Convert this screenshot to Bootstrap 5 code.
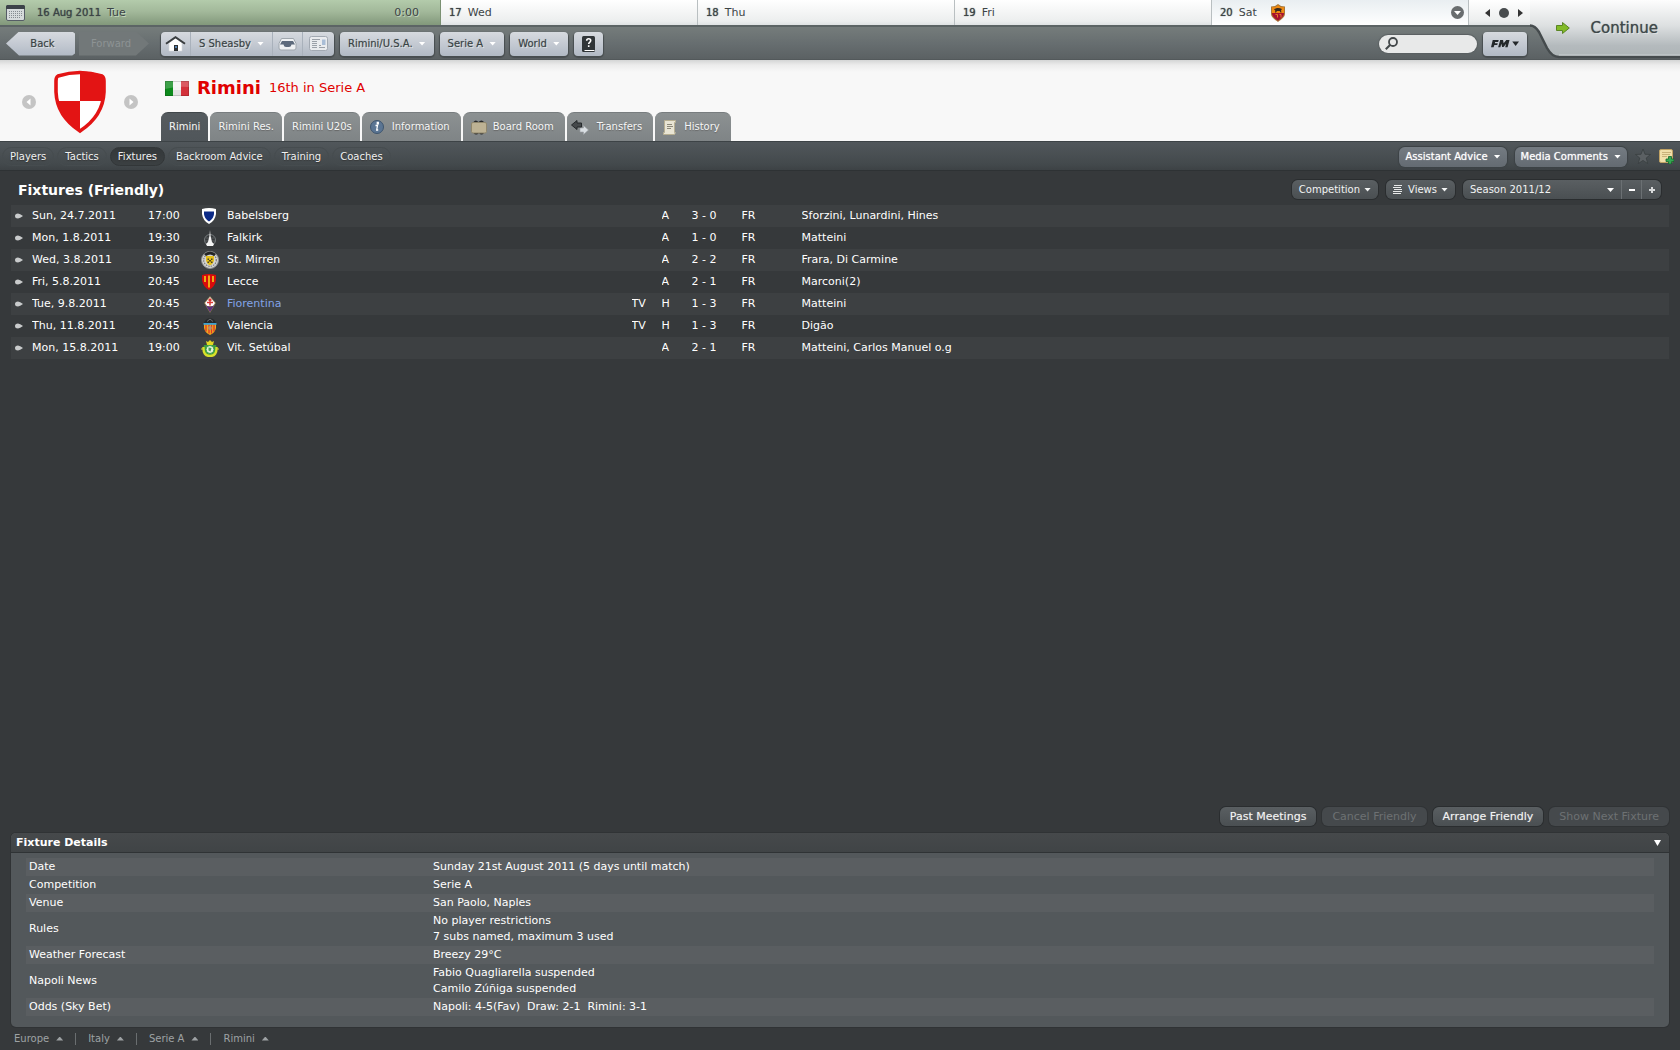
<!DOCTYPE html>
<html lang="en">
<head>
<meta charset="utf-8">
<meta name="viewport" content="width=device-width, initial-scale=1">
<title>Rimini - Fixtures</title>
<link rel="stylesheet" href="https://cdn.jsdelivr.net/npm/bootstrap@5.3.0/dist/css/bootstrap.min.css">
<style>
body{font-family:"DejaVu Sans",sans-serif;font-size:11px;line-height:16px;color:#fff;background:#36393b}
button,select,input{font-family:inherit}
svg{display:block;flex:none}
.caret{width:7px;height:4px;flex:none;background:currentColor;clip-path:polygon(0 0,100% 0,50% 100%)}
.caret.up{clip-path:polygon(50% 0,100% 100%,0 100%)}
.caret.pale{color:#fff}
.gap-6{gap:6px}

/* calendar strip */
.daybar{height:27px;background:linear-gradient(#fff,#eceeee 85%,#dfe2e3);color:#3c4446;border-bottom:2px solid #5c6465}
.day{flex:257 1 257px;padding:0 8px;border-right:1px solid #b9bfc1;font-size:11px}
.day b,.today b{font-size:10px;font-weight:400;text-shadow:0 0 1px #3c4446}
.today{flex:441 1 441px;gap:12px;padding:0 21px 0 6px;background:linear-gradient(#b3cbab,#a3b99b 45%,#82987b);border-right:1px solid #7b9173;text-shadow:1px 1px 0 #c4d6bd}
.day.matchday{background:linear-gradient(#e9eef1,#f8fafb 70%,#fff);padding-right:4px}
.pager{flex:211 1 211px;padding-left:16px}
.plain{border:0;background:none;padding:0;color:inherit}

/* main toolbar */
.toolbar{height:33px;background:linear-gradient(#757c7b,#666d6f 55%,#5b6163);border-bottom:1px solid #53595b;padding:1px 153px 0 6px;gap:6px}
.tbtn{height:24px;border:0;padding:0 8px;font-size:10px;color:#394244;background:linear-gradient(#d6dadf,#c2c8d1 55%,#b1b9c4);text-shadow:0 0 1px #8b9296,1px 1px 0 #e2e6ea}
.tbox{border-radius:4px;box-shadow:0 1px 1px 1px #484e50;overflow:hidden}
.tbox .tbtn+.tbtn{border-left:1px solid #a9b1bb}
.tbtn.news{padding:0 6px}
.history{gap:4px;margin-right:6px}
.nav-back{width:69px;padding-left:12px;clip-path:polygon(0 50%,13px 0,96% 0,100% 2px,100% 22px,96% 100%,13px 100%)}
.nav-fwd{width:70px;padding-right:14px;background:#727879;color:#8d9394!important;text-shadow:none;clip-path:polygon(0 0,57px 0,100% 50%,57px 100%,0 100%)}
.search{width:98px;height:18px;border-radius:9px;background:#e8e9e9;padding:0 6px;box-shadow:0 0 1px 1px #5a6062}
.search input{border:0;background:none;outline:0;width:66px;font-size:10px;padding:0}
.continue{width:150px;height:59px;color:#3f484a;font-size:15px}
.continue .cta{padding:0 22px 3px 26px;text-shadow:0 0 1px #5b6466,1px 1px 0 #e8ebec}

/* club header */
.club{height:81px;background:linear-gradient(#d4d5d5,#ececec 5px,#f8f8f8 12px)}
.crestbox{width:161px;padding:2px 23px 0 22px}
.clubname{color:#e00000;font-size:18px;font-weight:700;line-height:24px;margin:0}
.clubpos{color:#e00000;font-size:13px;line-height:24px}
.tabs{gap:2px}
.tabs a{height:29px;border-radius:7px 7px 0 0;background:linear-gradient(#8c9192,#7f8486);color:#f5f6f6;font-size:10px;padding:0 8px;text-decoration:none;text-shadow:0 1px 1px #666;border-top:1px solid #787d7f}
.tabs a.on{background:linear-gradient(#555b5f,#50565a);border-color:#41474a}
.tabs a.pic{padding-right:11px}

/* section navigation */
.subnav{height:30px;gap:3px;background:linear-gradient(#51575b,#43494c 80%,#3d4245);border-top:1px solid #3d4346;border-bottom:1px solid #2e3234;padding:1px 6px 0 2px}
.subnav a{height:19px;border-radius:10px;padding:0 7px;color:#f0f1f1;font-size:10px;text-decoration:none;border:1px solid #464c4f;text-shadow:0 1px 1px #333}
.subnav a.on{background:linear-gradient(#34383a,#3b4042);border-color:#323638}
.abtn{height:20px;border:0;border-radius:6px;padding:0 6px;font-size:10px;color:#fff;background:linear-gradient(#747b82,#646b72);box-shadow:0 0 1px 1px #3c4245;text-shadow:0 0 1px #ddd}

/* dark controls */
.dbtn{height:19px;border:0;border-radius:6px;padding:0 7px;font-size:10px;color:#f2f3f3;background:linear-gradient(#5a5f62,#4a4f52);box-shadow:0 0 0 1px #2a2d2f}
.season{box-shadow:0 0 0 1px #2a2d2f;border-radius:6px;overflow:hidden}
.season .dbtn{border-radius:0;box-shadow:none}
.season .step{width:20px;padding:0;border-left:1px solid #6b7073}
.season .pick{width:158px;position:relative}
.season select{appearance:none;width:100%}
.season .caret{position:absolute;right:7px;top:8px;pointer-events:none}
.act{font-size:11px;padding:0 10px;height:19px;text-shadow:0 0 1px #999}
.act:disabled{color:#6d7173;background:#45494c;text-shadow:none;box-shadow:0 0 0 1px #303335}
.actions{gap:6px;margin-bottom:7px}

/* fixtures */
.page-main{background:#36393b}
.inset-x{padding:0 11px}
.listhead{height:34px;padding:3px 19px 0 18px}
.listhead h1{font-size:14px;line-height:20px;font-weight:700;margin:0}
.fixlist{width:100%;table-layout:fixed}
.fixlist td{height:22px;padding:0;white-space:nowrap;overflow:hidden}
.fixlist tr:nth-child(odd){background:#3d4042}
.fixlist a{color:inherit;text-decoration:none}
.fixlist a.rival{color:#83a3e6}
.c-mark{width:21px}.c-date{width:116px}.c-time{width:53px}.c-crest{width:26px}.c-team{width:24.4%}.c-short{width:30px}.c-score{width:50px}.c-comp{width:60px}

/* details */
.details{border-radius:5px;background:#53585b;box-shadow:0 0 0 1px #303335}
.details-head{height:20px;border-radius:5px 5px 0 0;background:linear-gradient(#46494b,#404446);border-bottom:1px solid #2f3335;padding:0 8px 0 5px}
.details-head h2{font-size:11px;line-height:19px;font-weight:700;margin:0}
.details-body{padding:5px 15px 11px}
.dtable{width:100%;table-layout:fixed}
.dtable th{font-weight:400;width:404px}
.dtable th,.dtable td{padding:1px 3px}
.dtable tr:nth-child(odd){background:#5a5e61}
.crumbs{height:23px;gap:12px;padding-left:14px;color:#9ea2a4;font-size:10px}
.crumbs button{gap:7px;padding-right:12px;border-right:1px solid #6a6e70;height:12px;line-height:12px}
.crumbs button:last-child{border:0}
</style>
<script src="https://cdn.jsdelivr.net/npm/bootstrap@5.3.0/dist/js/bootstrap.bundle.min.js"></script>
</head>
<body class="d-flex flex-column min-vh-100">
<header class="position-relative">
  <div class="daybar d-flex align-items-stretch">
    <div class="today d-flex align-items-center">
      <svg width="19" height="16" viewBox="0 0 19 16"><rect x=".5" y=".5" width="18" height="15" rx="1.500" fill="#d6dbdc" stroke="#565d66"/><path d="M0 1.500a1.500 1.500 0 0 1 1.500-1.500h16a1.500 1.500 0 0 1 1.500 1.500V4H0z" fill="#3c4249"/><path d="M3 6.500h13M3 8.500h13M3 10.500h13M3 12.500h11" stroke="#858c91" stroke-dasharray="1 1"/></svg>
      <div class="d-flex gap-6"><b>16 Aug 2011</b><span>Tue</span></div><span class="ms-auto">0:00</span>
    </div>
    <div class="day d-flex align-items-center gap-6"><b>17</b><span>Wed</span></div>
    <div class="day d-flex align-items-center gap-6"><b>18</b><span>Thu</span></div>
    <div class="day d-flex align-items-center gap-6"><b>19</b><span>Fri</span></div>
    <div class="day matchday d-flex align-items-center gap-6"><b>20</b><span>Sat</span>
      <svg class="ms-2" width="14" height="18" viewBox="0 0 14 18"><path d="M0 2.500 4 2 7 0l3 2 4 .5v7c0 4-4 6-7 8.500C4 15.500 0 13.500 0 9.500z" fill="#a87838"/><path d="M1 3.300 4.500 3 7 1.200 9.500 3l3.500.3V9H1z" fill="#f08a12"/><path d="M1 9h12c0 4-3.500 5.500-6 7.800C4.500 14.500 1 13 1 9z" fill="#a9122f"/><path d="M3 5.500c1.500-1.500 5-2 8-.5l-1 1.500.5 2h-1l-.8-1.500H6L5 8.500H4l.3-2z" fill="#3a2b20"/><path d="M4.500 10.500h2v3m2-3h1.500v3" stroke="#e67a2a" fill="none"/></svg>
      <button class="plain ms-auto" aria-label="Show day"><svg width="13" height="13" viewBox="0 0 13 13"><circle cx="6.500" cy="6.500" r="6.500" fill="#696d6f"/><path d="M3 5h7l-3.500 4z" fill="#fff"/></svg></button></div>
    <div class="pager d-flex align-items-center gap-2">
      <button class="plain" aria-label="Earlier"><svg width="5" height="8" viewBox="0 0 5 8"><path d="M5 0v8L0 4z" fill="#333"/></svg></button>
      <svg width="12" height="12" viewBox="0 0 12 12"><circle cx="6" cy="6" r="5" fill="#484c4e"/></svg>
      <button class="plain" aria-label="Later"><svg width="5" height="8" viewBox="0 0 5 8"><path d="M0 0v8l5-4z" fill="#333"/></svg></button>
    </div>
  </div>

  <nav class="toolbar d-flex align-items-center">
    <div class="history d-flex">
      <button class="tbtn nav-back">Back</button>
      <button class="tbtn nav-fwd" disabled>Forward</button>
    </div>
    <div class="tbox d-flex">
      <button class="tbtn px-1" aria-label="Home"><svg width="21" height="16" viewBox="0 0 21 16"><path d="M4 7 10.500 2 17 7v8H4z" fill="#fff" stroke="#d4d7da" stroke-width=".6"/><path d="M1 7.800 10.500 1.200 20 7.800" fill="none" stroke="#3a3e40" stroke-width="2"/><path d="M9 9h4v6H9z" fill="#2d3133"/><path d="M10 10h2v2h-2z" fill="#5580b0"/></svg></button>
      <button class="tbtn d-flex align-items-center gap-6">S Sheasby<i class="caret pale"></i></button>
      <button class="tbtn px-1" aria-label="Inbox"><svg width="21" height="14" viewBox="0 0 21 14"><path d="M4.500 1.500h12l2.500 5V11q0 2-2 2h-13q-2 0-2-2V6.500z" fill="#eff1f3" stroke="#9fa6ad"/><path d="M5 4h11l2 3.500h-3.500Q14 10 12 10H9Q7 10 6.500 7.500H3z" fill="#5d6a7c"/></svg></button>
      <button class="tbtn news" aria-label="News"><svg width="19" height="15" viewBox="0 0 19 15"><rect x=".5" y=".5" width="18" height="14" rx="2" fill="#e9ebee" stroke="#a2a9b2"/><path d="M3 3.500h8M3 5.500h5M3 7.500h5M3 9.500h5M3 11.500h5M10 11.500h6M10 9.500h2" stroke="#9aa0a8"/><path d="M13 3.500h3.500V9H13z" fill="#a9bdd6"/></svg></button>
    </div>
    <div class="tbox"><button class="tbtn d-flex align-items-center gap-6">Rimini/U.S.A.<i class="caret pale"></i></button></div>
    <div class="tbox"><button class="tbtn d-flex align-items-center gap-6">Serie A<i class="caret pale"></i></button></div>
    <div class="tbox"><button class="tbtn d-flex align-items-center gap-6">World<i class="caret pale"></i></button></div>
    <div class="tbox"><button class="tbtn d-flex align-items-center" aria-label="Help"><svg width="13" height="16" viewBox="0 0 13 16"><rect width="13" height="16" rx="1.500" fill="#303538"/><path d="M2.500 14.500h10" stroke="#fff"/><path d="M4.700 4.800q0-2 2-2t2 1.800q0 1-1 1.700t-1 1.700M6.700 9.300v1.700" fill="none" stroke="#fff" stroke-width="1.600"/></svg></button></div>
    <label class="search d-flex align-items-center gap-2 ms-auto"><svg width="13" height="13" viewBox="0 0 13 13"><circle cx="8" cy="5" r="4" fill="none" stroke="#43484a" stroke-width="1.800"/><path d="M5 8 .8 12.200" stroke="#43484a" stroke-width="2"/></svg><input type="text" aria-label="Search"></label>
    <div class="tbox"><button class="tbtn d-flex align-items-center px-2" aria-label="FM menu"><svg width="28" height="9" viewBox="0 0 29 9"><path d="M1.800 1H8l-.6 2H4.300L4 4.200h3L6.500 6h-3L2.700 8.500H0z" fill="#23282a"/><path d="M9.500 1h3l.6 3.200L15.800 1H19.200l-2 7.500h-2.500l1-3.700-2.700 3.200h-1.500l-.8-3.200-1 3.700H7.400z" fill="#23282a"/><path d="M22 2.500h7L25.500 7z" fill="#23282a"/></svg></button></div>
  </nav>

  <div class="continue position-absolute top-0 end-0">
    <svg class="position-absolute top-0 end-0" width="150" height="59" viewBox="0 0 150 59"><defs><linearGradient id="cg" x1="0" y1="0" x2="0" y2="1"><stop offset="0" stop-color="#fdfdfd"/><stop offset=".45" stop-color="#dde0e1"/><stop offset=".8" stop-color="#b4babd"/><stop offset="1" stop-color="#adb4b6"/></linearGradient></defs><path d="M0 0h150v57H29Q22 57 17 48L9 32Q5 25 0 25z" fill="url(#cg)"/><path d="M150 57H29Q22 57 17 48L9 32Q5 25.500 0 25.500" fill="none" stroke="#454b4d" stroke-width="2.500"/><path d="M150 55H29" stroke="#c9ced0"/></svg>
    <button class="plain cta position-relative w-100 h-100 d-flex align-items-center justify-content-between"><svg width="14" height="12" viewBox="0 0 14 12"><path d="M.5 3.500h6v-3L13.300 6 6.500 11.500v-3h-6z" fill="#82bb27" stroke="#5a8524"/></svg><span>Continue</span></button>
  </div>
</header>

<section class="club d-flex">
  <div class="crestbox d-flex align-items-center justify-content-between">
    <button class="plain" aria-label="Previous club"><svg width="14" height="14" viewBox="0 0 14 14"><circle cx="7" cy="7" r="7" fill="#c4c4c4"/><path d="M8.500 3.500v7L4.500 7z" fill="#fff"/></svg></button>
    <svg width="54" height="64" viewBox="0 0 54 64"><path d="M4 6Q27-2 50 6 52 8 52 13V25Q50 46 27 61 4 46 2 25V13Q2 8 4 6z" fill="#fff"/><path d="M27 1.500Q40 1.500 50 5.500 52 7 52 11V25Q51.500 28 50.500 31H27zM27 31H4Q10 49 27 60z" fill="#e31414"/><path d="M5 6Q27-1 49 6 51 7 51 11V22Q50 46 27 61 4 46 3 22V11Q3 7 5 6z" fill="none" stroke="#e31414" stroke-width="3.600"/></svg>
    <button class="plain" aria-label="Next club"><svg width="14" height="14" viewBox="0 0 14 14"><circle cx="7" cy="7" r="7" fill="#c4c4c4"/><path d="M5.500 3.500v7l4-3.500z" fill="#fff"/></svg></button>
  </div>
  <div class="d-flex flex-column justify-content-between pt-3">
    <div class="d-flex align-items-center px-1">
      <svg width="24" height="15" viewBox="0 0 24 15"><path d="M0 0h8v15H0z" fill="#0d8a1c"/><path d="M8 0h8v15H8z" fill="#f4f4f4"/><path d="M8 9h8v6H8z" fill="#e2e2e2"/><path d="M16 0h8v15h-8z" fill="#d3313b"/><path d="M0 0h24v6Q12 5 0 8z" fill="#fff" opacity=".2"/><rect x=".5" y=".5" width="23" height="14" fill="none" stroke="#000" stroke-opacity=".15"/></svg>
      <h1 class="clubname ms-2">Rimini</h1><span class="clubpos ms-2">16th in Serie A</span>
    </div>
    <nav class="tabs d-flex">
      <a href="#" class="on d-flex align-items-center">Rimini</a>
      <a href="#" class="d-flex align-items-center">Rimini Res.</a>
      <a href="#" class="d-flex align-items-center">Rimini U20s</a>
      <a href="#" class="pic d-flex align-items-center gap-2"><svg width="14" height="14" viewBox="0 0 14 14"><circle cx="7" cy="7" r="6.500" fill="#5b7593" stroke="#3f566f"/><path d="M5.500 5.500h2L6.700 10h1.500M7.300 2.500h1v1.300h-1z" fill="none" stroke="#fff" stroke-width="1.300"/></svg>Information</a>
      <a href="#" class="pic d-flex align-items-center gap-6"><svg width="16" height="15" viewBox="0 0 16 15"><path d="M2.500 2q2-3 5 0 3-3 5.500 0v11q-2.500 3-5 0-3 3-5.500 0z" fill="#26282a"/><rect x=".5" y="2.500" width="15" height="10.500" rx="1.500" fill="#bdb294" stroke="#8f866c"/></svg>Board Room</a>
      <a href="#" class="pic d-flex align-items-center gap-2 ps-1"><svg width="18" height="15" viewBox="0 0 18 15"><path d="M17.500 10 12.500 5.500V8H9v4h3.500v2.500z" fill="#d9dee2" stroke="#9aa0a4" stroke-width=".6"/><path d="M.5 5 6 .5V3h4.500v4H6v2.500z" fill="#45494b" stroke="#25292b"/></svg>Transfers</a>
      <a href="#" class="pic d-flex align-items-center gap-2"><svg width="13" height="15" viewBox="0 0 13 15"><path d="M1.500.5h11v2h-1v10h1l-1 2H.5v-2h1z" fill="#e9e5d4" stroke="#b7af92"/><path d="M4 4.500h5M4 6.500h6M4 8.500h4" stroke="#8c8879"/></svg>History</a>
    </nav>
  </div>
</section>

<nav class="subnav d-flex align-items-center">
  <a href="#" class="d-flex align-items-center">Players</a>
  <a href="#" class="d-flex align-items-center">Tactics</a>
  <a href="#" class="d-flex align-items-center on">Fixtures</a>
  <a href="#" class="d-flex align-items-center">Backroom Advice</a>
  <a href="#" class="d-flex align-items-center">Training</a>
  <a href="#" class="d-flex align-items-center">Coaches</a>
  <div class="d-flex align-items-center gap-2 ms-auto">
    <button class="abtn d-flex align-items-center gap-6">Assistant Advice<i class="caret"></i></button>
    <button class="abtn d-flex align-items-center gap-6">Media Comments<i class="caret"></i></button>
    <button class="plain" aria-label="Bookmark"><svg width="16" height="15" viewBox="0 0 16 15"><path d="m8 0 2 5.300 5.500.2-4.300 3.500 1.500 5.500L8 11.400l-4.700 3.100L4.800 9 .5 5.500 6 5.300z" fill="#5b6063" stroke="#373c3e" stroke-width=".7"/></svg></button>
    <button class="plain" aria-label="Add note"><svg width="15" height="15" viewBox="0 0 15 15"><rect x=".5" y=".5" width="13" height="13" rx="1.500" fill="#f1dfaa" stroke="#c0a264"/><path d="M3 3.500h9M3 5.500h8M3 7.500h5" stroke="#c9b27a"/><path d="M9.500 7.500h3V10H15v2.500h-2.500V15h-3v-2.500H7V10h2.500z" fill="#35a853" stroke="#13632b" stroke-width=".8"/></svg></button>
  </div>
</nav>

<main class="page-main flex-grow-1 d-flex flex-column">
  <div class="listhead d-flex align-items-center">
    <h1>Fixtures (Friendly)</h1>
    <div class="d-flex gap-2 ms-auto">
      <button class="dbtn d-flex align-items-center gap-1">Competition<i class="caret"></i></button>
      <button class="dbtn d-flex align-items-center gap-1"><svg width="11" height="9" viewBox="0 0 11 9" shape-rendering="crispEdges"><path d="M1 0h8v1H1zM0 2h8v1H0zM1 4h8v1H1zM0 6h9v1H0zM0 8h8v1H0z" fill="#e8e9e9"/></svg>Views<i class="caret"></i></button>
      <div class="season d-flex">
        <div class="pick"><select class="dbtn" aria-label="Season"><option>Season 2011/12</option></select><i class="caret"></i></div>
        <button class="dbtn step d-flex align-items-center justify-content-center" aria-label="Previous season"><svg width="8" height="8" viewBox="0 0 8 8"><path d="M1 4h6" stroke="#fff" stroke-width="2"/></svg></button>
        <button class="dbtn step d-flex align-items-center justify-content-center" aria-label="Next season"><svg width="8" height="8" viewBox="0 0 8 8"><path d="M1 4h6M4 1v6" stroke="#d8dadb" stroke-width="2"/></svg></button>
      </div>
    </div>
  </div>

  <svg width="0" height="0" class="position-absolute"><symbol id="mk" viewBox="0 0 8 6"><path d="M0 3Q0 .5 3 .5 5 .8 8 3 5 5.200 3 5.500 0 5.500 0 3z" fill="#c9cbcc"/></symbol></svg>
  <div class="inset-x">
  <table class="fixlist">
    <colgroup><col class="c-mark"><col class="c-date"><col class="c-time"><col class="c-crest"><col class="c-team"><col class="c-short"><col class="c-short"><col class="c-score"><col class="c-comp"><col></colgroup>
    <tbody>
    <tr><td><svg class="ms-1" width="8" height="6"><use href="#mk"/></svg></td><td>Sun, 24.7.2011</td><td>17:00</td><td><svg width="16" height="16" viewBox="0 0 16 16"><path d="M1 1Q8-1 15 1v5q-1 7-7 10Q2 13 1 6z" fill="#fff"/><path d="M3 3.500h10V6q-.5 5-5 7.500Q3.500 11 3 6z" fill="#0c2a86"/></svg></td><td><a href="#">Babelsberg</a></td><td></td><td>A</td><td>3 - 0</td><td>FR</td><td>Sforzini, Lunardini, Hines</td></tr>
    <tr><td><svg class="ms-1" width="8" height="6"><use href="#mk"/></svg></td><td>Mon, 1.8.2011</td><td>19:30</td><td><svg width="18" height="16" viewBox="0 0 18 16"><circle cx="9" cy="10" r="5.500" fill="none" stroke="#777c7e"/><path d="M5 8h8M4 11h10" stroke="#6a6f71" stroke-width=".7"/><path d="M9 0 9.600 6 11 12l2 2-1 2H6l-1-2 2-2 1.400-6z" fill="#f4f4f4"/></svg></td><td><a href="#">Falkirk</a></td><td></td><td>A</td><td>1 - 0</td><td>FR</td><td>Matteini</td></tr>
    <tr><td><svg class="ms-1" width="8" height="6"><use href="#mk"/></svg></td><td>Wed, 3.8.2011</td><td>19:30</td><td><svg width="18" height="18" viewBox="0 0 18 18"><circle cx="9" cy="9" r="8.500" fill="#d5d5d3" stroke="#8e9090"/><circle cx="9" cy="9" r="6.300" fill="none" stroke="#77797a" stroke-width="1.200" stroke-dasharray="1.500 1"/><path d="M3 3q6-5 12 0l-2 2Q9 2 5 5z" fill="#232526"/><path d="M5 5h8v5q-1 3-4 4.500Q6 13 5 10z" fill="#e3bf1c"/><path d="M6.500 7.500h1.500V9H6.500zm3.500 0h1.500V9H10zM8 9h2v1.500H8zm-1.500 1.500h1.500V12H6.500zm3.500 0h1.500V12H10z" fill="#4a4326"/></svg></td><td><a href="#">St. Mirren</a></td><td></td><td>A</td><td>2 - 2</td><td>FR</td><td>Frara, Di Carmine</td></tr>
    <tr><td><svg class="ms-1" width="8" height="6"><use href="#mk"/></svg></td><td>Fri, 5.8.2011</td><td>20:45</td><td><svg width="16" height="16" viewBox="0 0 16 16"><path d="M1 1Q8-1 15 1v5q-1 7-7 10Q2 13 1 6z" fill="#d90b0b"/><path d="M4 2v6M8 1.500v12M12 2v6" stroke="#f9dd16" stroke-width="1.500"/></svg></td><td><a href="#">Lecce</a></td><td></td><td>A</td><td>2 - 1</td><td>FR</td><td>Marconi(2)</td></tr>
    <tr><td><svg class="ms-1" width="8" height="6"><use href="#mk"/></svg></td><td>Tue, 9.8.2011</td><td>20:45</td><td><svg width="18" height="17" viewBox="0 0 18 17"><path d="M9 0l6 7-6 10-6-10z" fill="#8d7b4f"/><path d="M9 1l5 6-2 3H6L4 7z" fill="#fff"/><path d="M5 9.500 9 11l4-1.500L9 16z" fill="#59307f"/><path d="M9 3v6.500M6 6.500h6M7.500 4.500 9 3l1.500 1.500" stroke="#d93a35" stroke-width="1.500" fill="none"/></svg></td><td><a href="#" class="rival">Fiorentina</a></td><td>TV</td><td>H</td><td>1 - 3</td><td>FR</td><td>Matteini</td></tr>
    <tr><td><svg class="ms-1" width="8" height="6"><use href="#mk"/></svg></td><td>Thu, 11.8.2011</td><td>20:45</td><td><svg width="18" height="17" viewBox="0 0 18 17"><path d="M3 5Q4 1 9 0q5 1 6 5z" fill="#25292b"/><path d="M6 3.500 9 1l3 2.500" stroke="#6c7072" fill="none"/><path d="M3 6h12v4q-1 5-6 7-5-2-6-7z" fill="#f0a81c"/><path d="M5 6.500v7M8 6.500v9M10.500 6.500v9M13 6.500v7" stroke="#d9362b" stroke-width="1.300"/><path d="M2.500 5h13v1.800h-13z" fill="#3da0cf"/><circle cx="9" cy="10" r="1.900" fill="#b19270"/></svg></td><td><a href="#">Valencia</a></td><td>TV</td><td>H</td><td>1 - 3</td><td>FR</td><td>Digão</td></tr>
    <tr><td><svg class="ms-1" width="8" height="6"><use href="#mk"/></svg></td><td>Mon, 15.8.2011</td><td>19:00</td><td><svg width="18" height="17" viewBox="0 0 18 17"><path d="M5 1l2 1 2-2 2 2 2-1-1 4H6z" fill="#e4d822"/><path d="M3 5h12l1 4q0 6-7 8-7-2-7-8z" fill="#3c9b3c"/><path d="M2.500 7Q2 16 9 16t6.500-9" fill="none" stroke="#d8e02a" stroke-width="2.400"/><circle cx="9" cy="9.500" r="4" fill="#e6f2da" stroke="#3aa04a"/><path d="M7.500 7.500l3 .5-1 3.500-2-1z" fill="#46a352"/><path d="M0 9h2M16 9h2" stroke="#cfd12a"/></svg></td><td><a href="#">Vit. Setúbal</a></td><td></td><td>A</td><td>2 - 1</td><td>FR</td><td>Matteini, Carlos Manuel o.g</td></tr>
    </tbody>
  </table>
  </div>

  <div class="mt-auto inset-x">
    <div class="actions d-flex justify-content-end">
      <button class="dbtn act">Past Meetings</button>
      <button class="dbtn act" disabled>Cancel Friendly</button>
      <button class="dbtn act">Arrange Friendly</button>
      <button class="dbtn act" disabled>Show Next Fixture</button>
    </div>
    <section class="details">
      <div class="details-head d-flex align-items-center justify-content-between">
        <h2>Fixture Details</h2>
        <button class="plain" aria-label="Collapse"><svg width="7" height="6" viewBox="0 0 7 6"><path d="M0 0h7L3.500 6z" fill="#fff"/></svg></button>
      </div>
      <div class="details-body">
        <table class="dtable">
          <tr><th scope="row">Date</th><td>Sunday 21st August 2011 (5 days until match)</td></tr>
          <tr><th scope="row">Competition</th><td>Serie A</td></tr>
          <tr><th scope="row">Venue</th><td>San Paolo, Naples</td></tr>
          <tr><th scope="row">Rules</th><td>No player restrictions<br>7 subs named, maximum 3 used</td></tr>
          <tr><th scope="row">Weather Forecast</th><td>Breezy 29°C</td></tr>
          <tr><th scope="row">Napoli News</th><td>Fabio Quagliarella suspended<br>Camilo Zúñiga suspended</td></tr>
          <tr><th scope="row">Odds (Sky Bet)</th><td>Napoli: 4-5(Fav)&nbsp; Draw: 2-1&nbsp; Rimini: 3-1</td></tr>
        </table>
      </div>
    </section>
  </div>
</main>

<footer class="crumbs d-flex align-items-center">
  <button class="plain d-flex align-items-center">Europe<i class="caret up"></i></button>
  <button class="plain d-flex align-items-center">Italy<i class="caret up"></i></button>
  <button class="plain d-flex align-items-center">Serie A<i class="caret up"></i></button>
  <button class="plain d-flex align-items-center">Rimini<i class="caret up"></i></button>
</footer>
</body>
</html>
